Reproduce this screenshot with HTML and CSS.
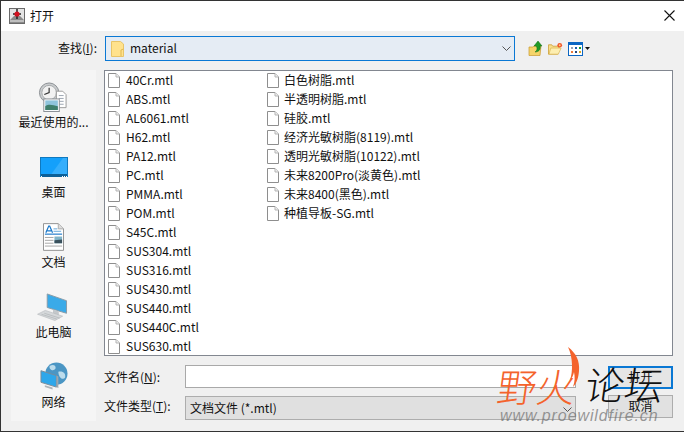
FILE: index.html
```html
<!DOCTYPE html>
<html lang="zh">
<head>
<meta charset="utf-8">
<title>打开</title>
<link rel="stylesheet" href="styles.css">
</head>
<body>
<svg class="defs" width="0" height="0">
  <defs>
    <symbol id="doc" viewBox="0 0 12 15">
      <path d="M.5.500H8L11.500 4V14.500H.5Z" fill="#fff" stroke="#8e8e8e"/>
      <path d="M8 .5V4H11.500" fill="#eee" stroke="#b5b5b5"/>
    </symbol>
  </defs>
</svg>
<div class="window">
  <header class="titlebar">
    <svg class="app-icon" width="16" height="16" viewBox="0 0 16 16">
      <rect x=".5" y=".5" width="15" height="15" fill="#e4e4e4" stroke="#6a6a6a"/>
      <path d="M1 12L5 8H11L15 12V15H1Z" fill="#8a8a8a"/>
      <path d="M1 13H15" stroke="#f4f4f4"/>
      <path d="M8 1V11M4 6H12" stroke="#222" stroke-width="1.500"/>
      <circle cx="8" cy="6" r="2.600" fill="#d4101f"/>
    </svg>
    <span class="title">打开</span>
    <svg class="close" width="11" height="11" viewBox="0 0 11 11"><path d="M.5.500L10.500 10.500M10.500.500L.5 10.500" stroke="#111" stroke-width="1.100"/></svg>
  </header>
  <div class="lookup">
    <label class="lookup-label">查找(<u>I</u>):</label>
    <div class="combo">
      <svg width="13" height="16" viewBox="0 0 13 16"><path d="M.5.500H9.500L12.500 3V15.500H.5Z" fill="#ffe28d" stroke="#e8c468"/><path d="M10 15V9L12.500 8" fill="none" stroke="#e0b850"/></svg>
      <span class="combo-text">material</span>
      <svg class="chev" width="9" height="5" viewBox="0 0 9 5"><path d="M.5.500L4.500 4.500L8.500.500" fill="none" stroke="#555"/></svg>
    </div>
    <div class="tools">
      <svg width="15" height="17" viewBox="0 0 15 17"><path d="M1 7H5L6 6H13L12 15.500H1Z" fill="#f5d469" stroke="#c99a2e" stroke-width=".7"/><path d="M7 12C10 10 9 7 8 6H6L10 1L14 6H12C13 9 11 12 7 12Z" fill="#1f9a25" stroke="#0f6b17" stroke-width=".5"/></svg>
      <svg width="15" height="14" viewBox="0 0 16 14"><path d="M.5 2.500H4L5 4H12L10.500 12.500H.5Z" fill="#f9df8a" stroke="#c99a2e" stroke-width=".8"/><path d="M1 12.500L3 6H14L11 12.500Z" fill="#fdeeb0" stroke="#d3a93e" stroke-width=".6"/><circle cx="12.500" cy="3" r="2.500" fill="#f2542a"/><circle cx="12.500" cy="3" r="1" fill="#ffd27a"/></svg>
      <span class="view-btn">
        <svg width="15" height="14" viewBox="0 0 15 14"><rect x=".5" y=".5" width="14" height="13" fill="#fff" stroke="#0b66c3"/><rect x="0" y="0" width="15" height="3" fill="#0b66c3"/><path d="M3 5h2v2H3z" fill="#9aa3b5"/><path d="M7 5h2v2H7z" fill="#1a5fb0"/><path d="M11 5h2v2h-2z" fill="#149a28"/><path d="M3 9h2v2H3z" fill="#ee7a3a"/><path d="M7 9h2v2H7z" fill="#24477c"/><path d="M11 9h2v2h-2z" fill="#d9a620"/></svg>
        <svg width="5" height="3" viewBox="0 0 5 3"><path d="M0 0H5L2.500 3Z" fill="#111"/></svg>
      </span>
    </div>
  </div>
  <div class="main">
    <nav class="places">
      <div class="place place-recent">
        <svg width="30" height="30" viewBox="0 0 30 31">
          <circle cx="11" cy="11" r="10" fill="#c9ccce" stroke="#8b8f93"/>
          <circle cx="11" cy="11" r="7.500" fill="#f2f2f2" stroke="#a5a8aa"/>
          <path d="M11 6V11L6 13" fill="none" stroke="#333" stroke-width="1.200"/>
          <path d="M18.500 9.500H25L28.500 13V26.500H18.500Z" fill="#fff" stroke="#9a9a9a"/>
          <path d="M21 14H26M21 17H26M21 20H26M21 23H26" stroke="#9aa5b0"/>
          <rect x="5.500" y="17.500" width="16" height="13" fill="#fff" stroke="#8a8f95"/>
          <rect x="7" y="19" width="13" height="10" fill="#8fc4dc"/>
          <path d="M7 25C11 22 15 24 20 25V29H7Z" fill="#3f7f6c"/>
        </svg>
        <span>最近使用的...</span>
      </div>
      <div class="place place-desktop">
        <svg width="28" height="20" viewBox="0 0 28 20">
          <rect x=".5" y=".5" width="27" height="19" fill="#14a0fb" stroke="#0f79bf"/>
          <path d="M10 19L23 1H27V19Z" fill="#35aefc"/>
          <rect x="1" y="17" width="26" height="3" fill="#0c5f97"/>
          <path d="M1 19h1v1H1zM22 19h1v1h-1zM24 19h1v1h-1zM26 19h1v1h-1z" fill="#fff"/>
        </svg>
        <span>桌面</span>
      </div>
      <div class="place place-docs">
        <svg width="21" height="28" viewBox="0 0 22 29">
          <path d="M.5.500H16L21.500 6V28.500H.5Z" fill="#fff" stroke="#8f8f8f"/>
          <path d="M16 .5V6H21.500" fill="#ddd" stroke="#aaa"/>
          <path d="M3 10L6 3H7L10 10M4.500 8H8.500" fill="none" stroke="#1b78c9" stroke-width="1.300"/>
          <path d="M11 6H15M11 8.500H19" stroke="#5ea4d8"/>
          <path d="M2 11.500H20" stroke="#1b78c9" stroke-width="1.200"/>
          <path d="M2 15H11M2 18H11M2 21H11M2 24H20" stroke="#a5a5a5"/>
          <rect x="12" y="14" width="8" height="7" fill="#7fb3c8"/>
          <path d="M12 18L20 17V21H12Z" fill="#39505c"/>
        </svg>
        <span>文档</span>
      </div>
      <div class="place place-pc">
        <svg width="32" height="28" viewBox="0 0 32 29">
          <path d="M10 1L30 8V21L10 15Z" fill="#3aaae8" stroke="#8a9aa6"/>
          <path d="M16 17L22 19V23L16 21Z" fill="#c4c8cb"/>
          <path d="M0 22L8 18L26 24L18 28.500Z" fill="#d5d8da" stroke="#b2b6b9" stroke-width=".6"/>
          <path d="M4 22L20 27M7 21L23 26" stroke="#aeb2b5" stroke-width=".7"/>
        </svg>
        <span>此电脑</span>
      </div>
      <div class="place place-net">
        <svg width="28" height="29" viewBox="0 0 29 30">
          <circle cx="17" cy="12" r="11.500" fill="#4b96c4"/>
          <path d="M10 4C14 2 17 4 16 7C14 10 9 8 10 4ZM19 10C24 9 27 12 26 16C23 20 19 15 19 10Z" fill="#bcdcec"/>
          <path d="M1 9L17 14V26L1 21Z" fill="#2ea7ea" stroke="#7c8c98"/>
          <path d="M17 14L19 15V27L17 26Z" fill="#9aa6ae"/>
          <path d="M5 24L13 26.500V28.500L5 26Z" fill="#aeb4b8"/>
        </svg>
        <span>网络</span>
      </div>
    </nav>
    <div class="content">
      <div class="files">
        <ul class="col col-1">
          <li><svg class="doc"><use href="#doc"/></svg>40Cr.mtl</li>
          <li><svg class="doc"><use href="#doc"/></svg>ABS.mtl</li>
          <li><svg class="doc"><use href="#doc"/></svg>AL6061.mtl</li>
          <li><svg class="doc"><use href="#doc"/></svg>H62.mtl</li>
          <li><svg class="doc"><use href="#doc"/></svg>PA12.mtl</li>
          <li><svg class="doc"><use href="#doc"/></svg>PC.mtl</li>
          <li><svg class="doc"><use href="#doc"/></svg>PMMA.mtl</li>
          <li><svg class="doc"><use href="#doc"/></svg>POM.mtl</li>
          <li><svg class="doc"><use href="#doc"/></svg>S45C.mtl</li>
          <li><svg class="doc"><use href="#doc"/></svg>SUS304.mtl</li>
          <li><svg class="doc"><use href="#doc"/></svg>SUS316.mtl</li>
          <li><svg class="doc"><use href="#doc"/></svg>SUS430.mtl</li>
          <li><svg class="doc"><use href="#doc"/></svg>SUS440.mtl</li>
          <li><svg class="doc"><use href="#doc"/></svg>SUS440C.mtl</li>
          <li><svg class="doc"><use href="#doc"/></svg>SUS630.mtl</li>
        </ul>
        <ul class="col col-2">
          <li><svg class="doc"><use href="#doc"/></svg>白色树脂.mtl</li>
          <li><svg class="doc"><use href="#doc"/></svg>半透明树脂.mtl</li>
          <li><svg class="doc"><use href="#doc"/></svg>硅胶.mtl</li>
          <li><svg class="doc"><use href="#doc"/></svg>经济光敏树脂(8119).mtl</li>
          <li><svg class="doc"><use href="#doc"/></svg>透明光敏树脂(10122).mtl</li>
          <li><svg class="doc"><use href="#doc"/></svg>未来8200Pro(淡黄色).mtl</li>
          <li><svg class="doc"><use href="#doc"/></svg>未来8400(黑色).mtl</li>
          <li><svg class="doc"><use href="#doc"/></svg>种植导板-SG.mtl</li>
        </ul>
      </div>
      <div class="form">
        <label class="form-label form-label-name">文件名(<u>N</u>):</label>
        <div class="name-input"></div>
        <button class="btn btn-primary">打开</button>
        <label class="form-label form-label-type">文件类型(<u>T</u>):</label>
        <div class="type-select">文档文件 (*.mtl)
          <svg class="chev" width="9" height="5" viewBox="0 0 9 5"><path d="M.5.500L4.500 4.500L8.500.500" fill="none" stroke="#555"/></svg>
        </div>
        <button class="btn btn-cancel">取消</button>
      </div>
    </div>
  </div>
  <div class="watermark">
    <svg class="flame" width="12" height="40" viewBox="0 0 12 40"><path d="M0 0C8 6 12 14 11 24C10.500 30 9 36 5 40C7 34 7 30 6 25C5.500 28 4 31 2 33C5 25 5 10 0 0Z" fill="#f4632c"/></svg>
    <span class="wm-ye">野火</span>
    <span class="wm-lt">论坛</span>
    <span class="wm-url">www.proewildfire.cn</span>
  </div>
</div>
</body>
</html>
```
FILE: styles.css
```css
* { box-sizing: border-box; }
html, body { margin: 0; padding: 0; }
body { width: 684px; height: 432px; overflow: hidden; background: #f0f0f0; }
.defs { position: absolute; }
.window {
  position: relative;
  width: 684px;
  height: 432px;
  display: flex;
  flex-direction: column;
  background: #f0f0f0;
  border-top: 1px solid #333;
  border-left: 1px solid #333;
  border-bottom: 1px solid #333;
  font: 12px/17px "Noto Sans CJK SC", "Noto Sans", sans-serif;
  color: #111;
}
.titlebar {
  height: 30px;
  background: #fff;
  display: flex;
  align-items: center;
  padding: 0 9px 0 8px;
  flex: none;
}
.app-icon { flex: none; }
.title { margin-left: 5px; margin-bottom: 2px; }
.close { margin-left: auto; margin-bottom: 2px; }
.lookup {
  display: flex;
  align-items: center;
  height: 25px;
  margin-top: 5px;
  flex: none;
}
.lookup-label { width: 96px; text-align: right; white-space: nowrap; margin-bottom: 2px; }
.combo {
  width: 410px;
  height: 25px;
  margin-left: 8px;
  background: #e5ecf4;
  border: 1px solid #0a78d4;
  display: flex;
  align-items: center;
  padding: 0 3px 0 5px;
}
.combo-text { margin-left: 6px; margin-bottom: 2px; }
.combo .chev { margin-left: auto; }
.tools { display: flex; align-items: center; margin-left: 13px; gap: 5px; }
.view-btn { display: flex; align-items: center; gap: 2px; }
.main { display: flex; margin-top: 9px; flex: 1; min-height: 0; }
.places {
  width: 85px;
  height: 351px;
  margin-left: 10px;
  background: #f5f5f5;
  display: flex;
  flex-direction: column;
  align-items: center;
  flex: none;
}
.place {
  height: 70px;
  flex: none;
  display: flex;
  flex-direction: column;
  align-items: center;
  justify-content: flex-end;
  white-space: nowrap;
}
.place span { line-height: 17px; margin-top: 2px; }
.place-recent { height: 60px; }
.place-recent span { margin-top: 1px; }
.place-desktop span { margin-top: 6px; }
.content { flex: 1; margin-left: 8px; margin-right: 11px; display: flex; flex-direction: column; min-width: 0; }
.files {
  height: 286px;
  background: #fff;
  border: 1px solid #828790;
  display: flex;
  padding: 0 0 0 3px;
  flex: none;
  overflow: hidden;
}
.col { list-style: none; margin: 0; padding: 0; }
.col-1 { width: 159px; }
.col li { height: 19px; display: flex; align-items: flex-start; line-height: 18px; white-space: nowrap; }
.doc { width: 12px; height: 15px; margin: 2px 6px 0 0; flex: none; }
.col-2 .doc { margin-right: 5px; }
.form {
  display: grid;
  grid-template-columns: 81px 1fr 65px;
  grid-template-rows: 24px 25px;
  row-gap: 6px;
  margin-top: 9px;
}
.form-label { white-space: nowrap; }
.form-label-name { align-self: center; margin-bottom: 2px; }
.form-label-type { align-self: start; margin-top: 2px; }
.name-input { height: 23px; background: #fff; border: 1px solid #a9a9a9; margin-right: 32px; align-self: start; }
.type-select {
  height: 24px;
  background: #e0e0e0;
  border: 1px solid #adadad;
  margin-right: 32px;
  padding-left: 4px;
  line-height: 21px;
  position: relative;
  align-self: end;
  white-space: nowrap;
}
.type-select .chev { position: absolute; right: 3px; top: 10px; }
.btn {
  font: inherit;
  color: inherit;
  background: #e1e1e1;
  border: 1px solid #adadad;
  padding: 0 0 2px;
  width: 65px;
  height: 23px;
}
.btn-primary { background: #e5e5e5; border: 2px solid #0a78d4; align-self: end; }
.btn-cancel { align-self: start; }
.watermark { position: absolute; left: -1px; top: -1px; width: 684px; height: 432px; pointer-events: none; }
.flame { position: absolute; left: 568px; top: 347px; }
.wm-ye {
  position: absolute; left: 498px; top: 363px;
  font: 300 39px/44px "Noto Sans CJK SC", sans-serif;
  color: #f4632c;
  white-space: nowrap;
  transform: skewX(-8deg);
}
.wm-lt {
  position: absolute; left: 586px; top: 361px;
  font: 300 39px/44px "Noto Sans CJK SC", sans-serif;
  color: #111;
  white-space: nowrap;
  transform: skewX(-8deg);
}
.wm-url {
  position: absolute; left: 500px; top: 408px;
  font: italic 16px/16px "Liberation Sans", sans-serif;
  letter-spacing: .9px;
  color: rgba(110, 110, 110, .7);
  white-space: nowrap;
}
```
